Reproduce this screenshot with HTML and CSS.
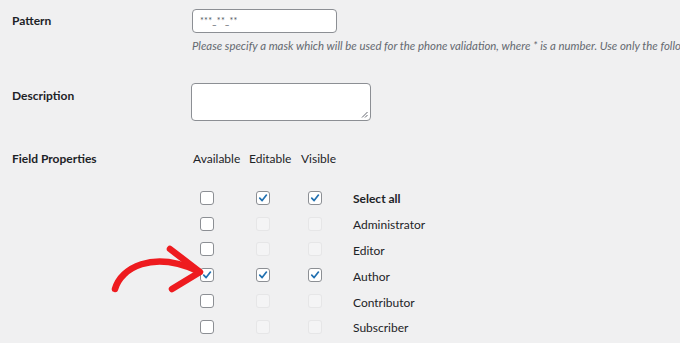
FILE: index.html
```html
<!DOCTYPE html>
<html>
<head>
<meta charset="utf-8">
<link rel="stylesheet" href="styles.css">
</head>
<body>
<div class="page">
  <div class="row row-pattern">
    <div class="label">Pattern</div>
    <div class="field">
      <div class="input">***_**_**</div>
      <p class="help">Please specify a mask which will be used for the phone validation, where * is a number. Use only the following</p>
    </div>
  </div>
  <div class="row row-desc">
    <div class="label label-desc">Description</div>
    <div class="field">
      <div class="textarea">
        <svg class="grip" width="7" height="7" viewBox="0 0 7 7"><path d="M6.5 1 L1 6.5 M6.5 4 L4 6.5" stroke="#646970" stroke-width="1" fill="none"/></svg>
      </div>
    </div>
  </div>
  <div class="row row-props">
    <div class="label">Field Properties</div>
    <div class="field">
      <div class="roles">
        <div class="head">Available</div><div class="head">Editable</div><div class="head">Visible</div><div class="head"></div>

        <div class="cell first"><span class="cb"></span></div>
        <div class="cell"><span class="cb on"><svg viewBox="0 0 14 14"><path d="M3.2 7.2 L6 10 L11 3.6"/></svg></span></div>
        <div class="cell"><span class="cb on"><svg viewBox="0 0 14 14"><path d="M3.2 7.2 L6 10 L11 3.6"/></svg></span></div>
        <div class="name strong">Select all</div>

        <div class="cell"><span class="cb"></span></div>
        <div class="cell"><span class="cb off"></span></div>
        <div class="cell"><span class="cb off"></span></div>
        <div class="name">Administrator</div>

        <div class="cell"><span class="cb"></span></div>
        <div class="cell"><span class="cb off"></span></div>
        <div class="cell"><span class="cb off"></span></div>
        <div class="name">Editor</div>

        <div class="cell"><span class="cb on"><svg viewBox="0 0 14 14"><path d="M3.2 7.2 L6 10 L11 3.6"/></svg></span></div>
        <div class="cell"><span class="cb on"><svg viewBox="0 0 14 14"><path d="M3.2 7.2 L6 10 L11 3.6"/></svg></span></div>
        <div class="cell"><span class="cb on"><svg viewBox="0 0 14 14"><path d="M3.2 7.2 L6 10 L11 3.6"/></svg></span></div>
        <div class="name">Author</div>

        <div class="cell"><span class="cb"></span></div>
        <div class="cell"><span class="cb off"></span></div>
        <div class="cell"><span class="cb off"></span></div>
        <div class="name">Contributor</div>

        <div class="cell"><span class="cb"></span></div>
        <div class="cell"><span class="cb off"></span></div>
        <div class="cell"><span class="cb off"></span></div>
        <div class="name">Subscriber</div>
      </div>
    </div>
  </div>
  <svg class="arrow" width="220" height="343" viewBox="0 0 220 343">
    <path d="M115 289 C 121 268, 152 250, 198 271" />
    <path d="M170 249 L 200 272 L 172 289" />
  </svg>
</div>
</body>
</html>
```

FILE: styles.css
```css
html, body {
  margin: 0;
  padding: 0;
  background: #f0f0f1;
}
body {
  font-family: "Lato", "Noto Sans", sans-serif;
  color: #1d2327;
  font-size: 12px;
  width: 680px;
  height: 343px;
  overflow: hidden;
}
.page {
  position: relative;
  padding-top: 9px;
  height: 334px;
}
.row {
  display: grid;
  grid-template-columns: 192px 1fr;
}
.label {
  padding-left: 12px;
  font-weight: 700;
  line-height: 16px;
}
.row-pattern .label {
  line-height: 24px;
}
.field {
  min-width: 0;
}
.input {
  width: 145px;
  height: 24px;
  box-sizing: border-box;
  border: 1px solid #8c8f94;
  border-radius: 4px;
  background: #fff;
  font-size: 9px;
  line-height: 22px;
  padding-left: 7px;
  color: #50575e;
  letter-spacing: 0.3px;
}
.help {
  margin: 5px 0 0;
  font-style: italic;
  font-size: 11.4px;
  line-height: 16px;
  color: #646970;
  white-space: nowrap;
  overflow: hidden;
}
.row-desc {
  margin-top: 29px;
}
.label-desc {
  padding-top: 5px;
}
.textarea {
  position: relative;
  width: 180px;
  height: 38px;
  box-sizing: border-box;
  border: 1px solid #8c8f94;
  border-radius: 4px;
  background: #fff;
  margin-left: -1px;
}
.grip {
  position: absolute;
  right: 2px;
  bottom: 2px;
}
.row-props {
  margin-top: 30px;
}
.roles {
  display: grid;
  grid-template-columns: 56px 52px 52px 1fr;
  grid-template-rows: 34px;
  grid-auto-rows: 25.8px;
  margin-left: 1px;
}
.roles .head {
  line-height: 16px;
}
.cell {
  display: flex;
  align-items: center;
  padding-left: 7px;
}
.cb {
  display: block;
  width: 14px;
  height: 14px;
  box-sizing: border-box;
  border: 1px solid #8c8f94;
  border-radius: 3px;
  background: #fff;
}
.cb svg {
  display: block;
  width: 12px;
  height: 12px;
  fill: none;
  stroke: #2271b1;
  stroke-width: 2;
  stroke-linecap: round;
  stroke-linejoin: round;
}
.cb.off {
  border-color: rgba(220, 220, 222, 0.6);
  background: rgba(255, 255, 255, 0.3);
}
.name {
  display: flex;
  align-items: center;
  padding-top: 2px;
  padding-left: 0;
}
.name.strong {
  font-weight: 700;
}
.arrow {
  position: absolute;
  left: 0;
  top: 0;
  pointer-events: none;
}
.arrow path {
  fill: none;
  stroke: #ee1b1f;
  stroke-width: 6.5;
  stroke-linecap: round;
  stroke-linejoin: round;
}
```
